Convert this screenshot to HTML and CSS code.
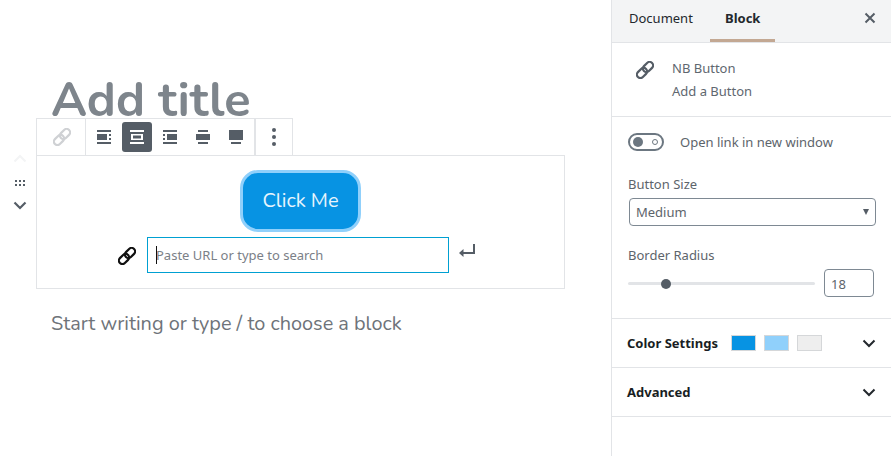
FILE: index.html
```html
<!DOCTYPE html>
<html lang="en">
<head>
<meta charset="utf-8">
<title>Editor</title>
<link rel="stylesheet" href="styles.css">
</head>
<body>
<svg class="defs" width="0" height="0">
  <defs>
    <g id="link" fill="none" stroke="currentColor" stroke-width="2.200">
      <g transform="rotate(-45 9 9)">
        <rect x="-1" y="5.500" width="11.500" height="7" rx="3.500"/>
        <rect x="7.500" y="5.500" width="11.500" height="7" rx="3.500"/>
      </g>
    </g>
  </defs>
</svg>
<div class="app">
  <main class="editor">
    <h1 class="title">Add title</h1>
    <div class="block-wrap">
      <div class="toolbar">
        <div class="tb-group tb-link">
          <svg class="ic-link ic-muted" width="18" height="18" viewBox="0 0 18 18"><use href="#link" /></svg>
        </div>
        <div class="tb-group tb-align">
          <span class="tb-btn"><svg width="20" height="20" viewBox="0 0 20 20"><path d="M3 3h14v2H3zM3 15h14v2H3zM3 7h10v6H3zM15 7h2v2h-2zM15 11h2v2h-2z"/></svg></span>
          <span class="tb-btn active"><svg width="20" height="20" viewBox="0 0 20 20"><path d="M3 3h14v2H3zM3 15h14v2H3z"/><path fill-rule="evenodd" d="M4 7h12v6H4zM6 8.500v3h8v-3z"/></svg></span>
          <span class="tb-btn"><svg width="20" height="20" viewBox="0 0 20 20"><path d="M3 3h14v2H3zM3 15h14v2H3zM7 7h10v6H7zM3 7h2v2H3zM3 11h2v2H3z"/></svg></span>
          <span class="tb-btn"><svg width="20" height="20" viewBox="0 0 20 20"><path d="M5 3h10v2H5zM5 15h10v2H5zM3 7h14v6H3z"/></svg></span>
          <span class="tb-btn"><svg width="20" height="20" viewBox="0 0 20 20"><path d="M3 3h14v10H3zM5 15h10v2H5z"/></svg></span>
        </div>
        <div class="tb-group tb-more">
          <svg width="20" height="24" viewBox="0 0 20 24"><circle cx="10" cy="5" r="2"/><circle cx="10" cy="12" r="2"/><circle cx="10" cy="19" r="2"/></svg>
        </div>
      </div>
      <div class="mover">
        <svg class="mv-up" width="14" height="9" viewBox="0 0 14 9"><path d="M1.500 7.500 7 2l5.500 5.500" fill="none" stroke-width="2"/></svg>
        <svg class="mv-drag" width="10" height="6" viewBox="0 0 10 6"><path d="M0 0h2v2H0zM4 0h2v2H4zM8 0h2v2H8zM0 4h2v2H0zM4 4h2v2H4zM8 4h2v2H8z"/></svg>
        <svg class="mv-down" width="14" height="9" viewBox="0 0 14 9"><path d="M1.500 1.500 7 7l5.500-5.500" fill="none" stroke-width="2.200"/></svg>
      </div>
      <div class="block">
        <a class="nb-button">Click Me</a>
        <div class="url-row">
          <svg class="url-link" width="18" height="18" viewBox="0 0 18 18"><use href="#link" /></svg>
          <div class="url-input"><span class="caret"></span>Paste URL or type to search</div>
          <svg class="url-enter" width="17" height="14" viewBox="0 0 17 14"><path d="M15 0v9H4" fill="none"/><path d="M4.500 5v8L0 9z" class="solid"/></svg>
        </div>
      </div>
    </div>
    <p class="placeholder">Start writing or type / to choose a block</p>
  </main>
  <aside class="sidebar">
    <div class="tabs">
      <span class="tab">Document</span>
      <span class="tab tab-active">Block</span>
      <svg class="close" width="12" height="12" viewBox="0 0 12 12"><path d="M1.500 1.500l9 9M10.500 1.500l-9 9" fill="none" stroke-width="2"/></svg>
    </div>
    <div class="card">
      <svg class="card-ic" width="18" height="18" viewBox="0 0 18 18"><use href="#link" /></svg>
      <div class="card-text">
        <div>NB Button</div>
        <div>Add a Button</div>
      </div>
    </div>
    <section class="settings">
      <div class="toggle-row">
        <span class="toggle"><span class="knob"></span><span class="dot"></span></span>
        <span>Open link in new window</span>
      </div>
      <label class="field-label">Button Size</label>
      <div class="select"><span>Medium</span><span class="arrow"></span></div>
      <label class="field-label radius-label">Border Radius</label>
      <div class="range-row">
        <div class="range"><span class="thumb"></span></div>
        <div class="num">18</div>
      </div>
    </section>
    <section class="panel panel-color">
      <strong>Color Settings</strong>
      <span class="swatch sw-blue"></span>
      <span class="swatch sw-light"></span>
      <span class="swatch sw-grey"></span>
      <svg class="chev" width="14" height="9" viewBox="0 0 14 9"><path d="M1.500 1.500 7 7l5.500-5.500" fill="none" stroke-width="2"/></svg>
    </section>
    <section class="panel">
      <strong>Advanced</strong>
      <svg class="chev" width="14" height="9" viewBox="0 0 14 9"><path d="M1.500 1.500 7 7l5.500-5.500" fill="none" stroke-width="2"/></svg>
    </section>
  </aside>
</div>
</body>
</html>
```

FILE: styles.css
```css
* { box-sizing: border-box; }
html, body { margin: 0; padding: 0; height: 100%; background: #fff; overflow: hidden; }
body { font-family: "Noto Sans", "Open Sans", sans-serif; color: #555d66; }
.defs { position: absolute; }

.app { display: flex; height: 456px; width: 891px; }

.editor { width: 611px; flex: none; padding: 68px 0 0 36px; }
.title {
  margin: 0 0 0 15px;
  font: 700 48.500px/64px "Nunito", "Lato", sans-serif;
  color: #7e858c;
  height: 64px;
}
.block-wrap { position: relative; width: 529px; margin-top: 23px; }

.toolbar {
  position: absolute;
  left: 0;
  top: -37px;
  height: 37px;
  width: 257px;
  display: flex;
  background: #fff;
  border: 1px solid #e2e4e7;
  border-bottom: 0;
}
.tb-group { display: flex; align-items: center; justify-content: center; height: 36px; }
.tb-link { width: 49px; border-right: 1px solid #e2e4e7; height: 36px; }
.ic-link { margin-left: 2px; }
.ic-muted { color: #cfd1d4; }
.tb-align { width: 170px; gap: 3px; border-right: 2px solid #e2e4e7; }
.tb-more { flex: 1; }
.tb-more svg, .tb-btn svg { fill: #555d66; display: block; }
.tb-btn { width: 30px; height: 30px; display: flex; align-items: center; justify-content: center; border-radius: 3px; }
.tb-btn.active { background: #555d66; }
.tb-btn.active svg { fill: #fff; }

.mover {
  position: absolute;
  left: -24px;
  top: 0;
  width: 16px;
  height: 62px;
  display: flex;
  flex-direction: column;
  align-items: center;
}
.mv-up { stroke: #f3f4f5; margin-top: -1px; }
.mv-drag { fill: #555d66; margin-top: 17px; }
.mv-down { stroke: #555d66; margin-top: 15px; }

.block {
  height: 134px;
  border: 1px solid #e2e4e7;
  display: flex;
  flex-direction: column;
  align-items: center;
  padding-top: 14px;
}
.nb-button {
  width: 121px;
  height: 62px;
  border: 3px solid #90d0fb;
  border-radius: 18px;
  background: #0793e3;
  color: #e8f5fd;
  font: 400 20px/56px "Nunito", "Lato", sans-serif;
  text-align: center;
}
.url-row { display: flex; align-items: flex-start; margin-top: 5px; position: relative; width: 302px; margin-left: -5px; }
.url-link { position: absolute; left: -29px; top: 10px; color: #111; }
.url-input {
  width: 302px;
  height: 36px;
  border: 1px solid #00a0d2;
  padding-left: 8px;
  font-size: 13px;
  line-height: 34px;
  color: #7b8087;
  position: relative;
  white-space: nowrap;
}
.caret { position: absolute; left: 8px; top: 8px; width: 1px; height: 18px; background: #111; }
.url-enter { position: absolute; left: 312px; top: 7px; stroke: #555d66; stroke-width: 2; }
.url-enter .solid { fill: #555d66; stroke: none; }

.placeholder {
  margin: 21px 0 0 15px;
  font: 400 19.900px/27px "Nunito", "Lato", sans-serif;
  color: #6e7379;
}

.sidebar { width: 280px; flex: none; border-left: 1px solid #e2e4e7; height: 456px; }
.tabs {
  height: 43px;
  background: #f3f4f5;
  border-bottom: 1px solid #e2e4e7;
  display: flex;
  align-items: stretch;
  position: relative;
  font-size: 13px;
  color: #23282d;
  padding-left: 5px;
}
.tab { padding: 0 12px; line-height: 36px; width: 98px; text-align: left; }
.tab:first-child { width: 93px; }
.tab-active { font-weight: 700; width: 65px; padding: 0 15px; height: 42px; border-bottom: 3px solid #c3a893; }
.close { position: absolute; left: 252px; top: 12px; stroke: #555d66; }

.card { height: 74px; border-bottom: 1px solid #e2e4e7; display: flex; padding: 18px 0 0 24px; font-size: 13px; line-height: 23px; color: #60676f; }
.card-ic { margin-right: 18px; color: #555d66; }
.card-text { margin-top: -4px; }

.settings { height: 202px; border-bottom: 1px solid #e2e4e7; padding: 0 15px 0 16px; font-size: 13px; color: #5d646b; }
.toggle-row { display: flex; align-items: center; gap: 16px; height: 50px; margin-bottom: 8px; }
.toggle { width: 36px; height: 18px; border: 2px solid #6c7781; border-radius: 9px; display: flex; align-items: center; justify-content: space-between; padding: 0 3px; }
.knob { width: 10px; height: 10px; border-radius: 50%; background: #6c7781; }
.dot { width: 6px; height: 6px; border-radius: 50%; border: 1px solid #6c7781; margin-right: 1px; }
.field-label { display: block; line-height: 18px; }
.select {
  margin: 5px 0 0 1px;
  height: 28px;
  width: 247px;
  border: 1px solid #7e8993;
  border-radius: 4px;
  display: flex;
  justify-content: space-between;
  align-items: center;
  padding: 0 6px;
  font-size: 13px;
}
.arrow { width: 0; height: 0; border-left: 3.500px solid transparent; border-right: 3.500px solid transparent; border-top: 6px solid #555d66; }
.radius-label { margin-top: 20px; }
.range-row { display: flex; align-items: center; margin-top: 5px; }
.range { width: 187px; height: 3px; background: #e2e4e7; border-radius: 2px; position: relative; }
.thumb { position: absolute; left: 33px; top: -3px; width: 10px; height: 10px; border-radius: 50%; background: #555d66; }
.num { margin-left: 9px; width: 50px; height: 28px; border: 1px solid #7e8993; border-radius: 4px; padding-left: 6px; line-height: 28px; }

.panel {
  height: 49px;
  border-bottom: 1px solid #e2e4e7;
  display: flex;
  align-items: center;
  padding-left: 15px;
  font-size: 13px;
  color: #191e23;
  position: relative;
}
.panel strong { font-weight: 700; }
.panel-color strong { margin-right: 13px; }
.swatch { width: 25px; height: 16px; margin-right: 8px; border: 1px solid #d5d7d9; }
.sw-blue { background: #0793e3; }
.sw-light { background: #90d0fb; }
.sw-grey { background: #eeeeee; }
.chev { position: absolute; left: 250px; top: 20px; stroke: #23282d; }
```
